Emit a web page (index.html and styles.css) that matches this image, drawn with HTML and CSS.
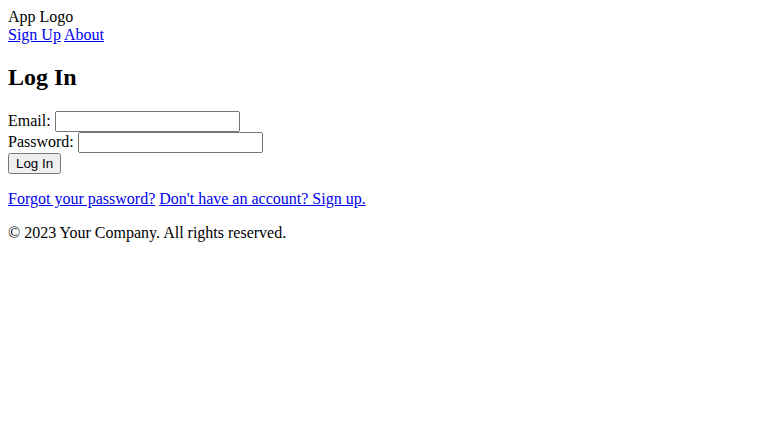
FILE: index.html
```html
<!DOCTYPE html>
<html>
<head>
<meta charset="utf-8">
<title>Log In</title>
<link rel="stylesheet" href="styles.css">
</head>
<body class="page">
<header>
<div class="logo">App Logo</div>
<nav><a href="#">Sign Up</a> <a href="#">About</a></nav>
</header>
<main>
<h2>Log In</h2>
<form>
<label for="email">Email:</label> <input type="email" id="email"><br>
<label for="password">Password:</label> <input type="password" id="password"><br>
<button type="submit">Log In</button>
</form>
<p><a href="#">Forgot your password?</a> <a href="#">Don't have an account? Sign up.</a></p>
</main>
<footer>
<p>&copy; 2023 Your Company. All rights reserved.</p>
</footer>
</body>
</html>
```

FILE: styles.css
```css
.page {
  font-family: "Liberation Serif", serif;
  color: #000;
  background: #fff;
}
```
